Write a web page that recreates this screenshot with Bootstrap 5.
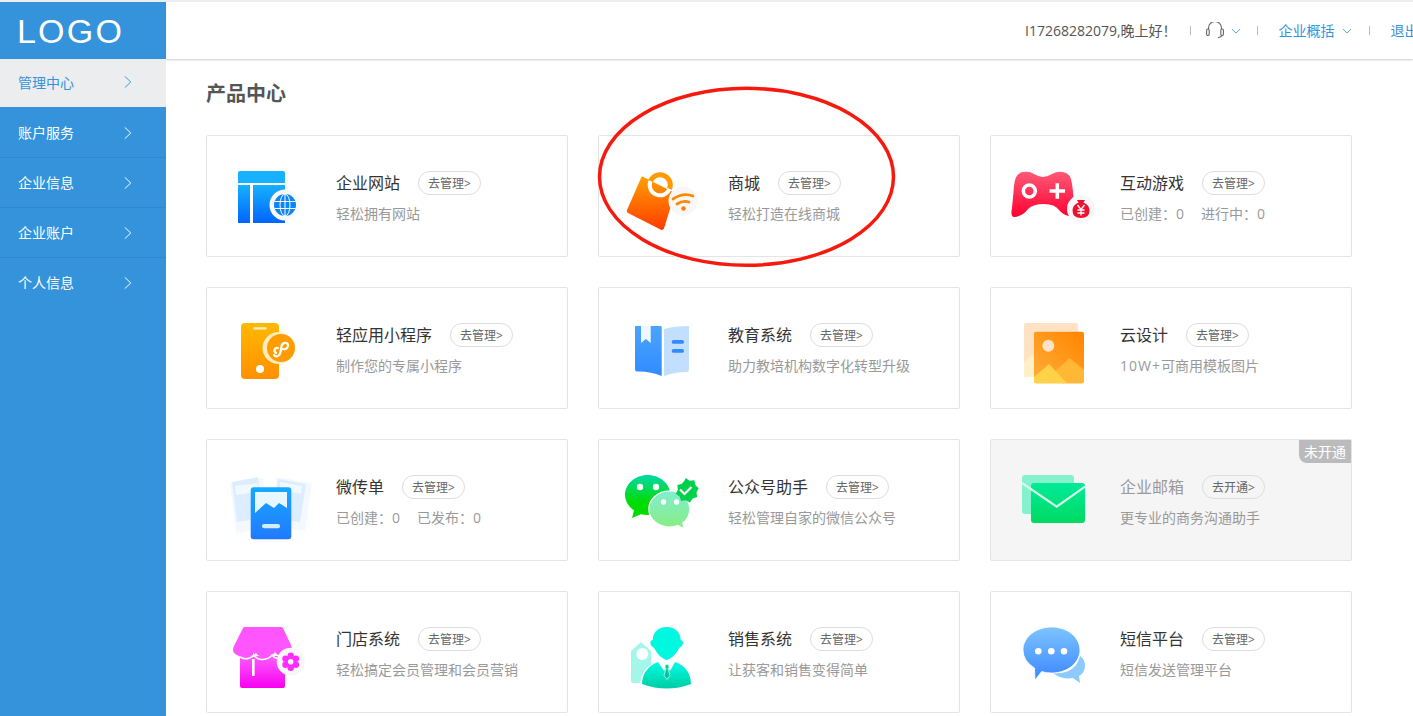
<!DOCTYPE html>
<html lang="zh-CN">
<head>
<meta charset="utf-8">
<title>产品中心</title>
<link href="https://cdn.jsdelivr.net/npm/bootstrap@5.3.0/dist/css/bootstrap.min.css" rel="stylesheet">
<style>
html,body{height:716px;overflow:hidden;background:#fff}
body{font-family:"Open Sans","Noto Sans CJK SC",sans-serif;font-size:14px;color:#333;border-top:2px solid #eee}
.side-bar{width:166px;flex:none;height:714px;background:#3593db}
.side-logo{height:57px;padding-left:17px;font-family:"Liberation Sans",sans-serif;font-size:34px;line-height:59px;letter-spacing:2.2px;color:#fff;box-shadow:0 1px 1px #cfcfcf}
.side-item{height:50px;flex:none;padding:0 34px 0 18px;color:#fff;border-bottom:1px solid #3089ce;text-decoration:none}
.side-item.on{height:48px;margin-bottom:1px;padding-bottom:2px;background:#ecedef;color:#3593db;border-bottom:0}
.side-item.tail{border-bottom-color:transparent}
.side-item svg{width:8px;height:14px}
.top-head{height:57px;padding-left:859px;white-space:nowrap;box-shadow:0 1px 2px #ccc;color:#555}
.top-head>*{flex:none}
.top-sep{width:1px;height:9px;background:#bbb;margin:0 15px 0 17px}
.top-sep.first{margin-left:13px}
.top-sep.second{margin-left:16px}
.top-link{color:#3593db;text-decoration:none;margin-left:6px}
.top-arrow{margin-left:7px}
.page-wrap{padding:0 40px}
.page-title{font-size:20px;font-weight:700;color:#555;line-height:28px;margin:21px 0 27px}
.prod-grid{display:grid;grid-template-columns:repeat(3,362px);gap:30px}
.prod-box{height:122px;border:1px solid #e4e4e4;border-radius:2px;background:#fff;position:relative}
.prod-box.off{background:#f5f5f5}
.prod-box.off .prod-name{color:#999}
.prod-ico{width:110px;height:90px;flex:none;margin:0 10px 0 9px}
.prod-text{padding-top:2px}
.prod-name{font-size:16px;line-height:24px;color:#333}
.prod-sub{color:#999;line-height:20px;margin-top:9px;white-space:nowrap}
.go-pill{font-size:12px;line-height:24px;height:24px;padding:0 9px;border:1px solid #ddd;border-radius:12px;color:#666;margin-left:18px;text-decoration:none}
.off-tag{position:absolute;top:0;right:0;width:52px;height:23px;line-height:24px;text-align:center;background:#bbb;color:#fff;border-bottom-left-radius:8px}
.gap-stat{margin-left:17px}
.wide-num{letter-spacing:1px}
.red-ring{position:absolute;left:590px;top:80px;width:320px;height:200px;pointer-events:none}
</style>
</head>
<body class="d-flex">
<svg class="position-absolute" width="0" height="0" aria-hidden="true"><defs>
<linearGradient id="gBlue" x1="0" y1="0" x2="0" y2="1"><stop offset="0" stop-color="#17b1ff"/><stop offset="1" stop-color="#0064ff"/></linearGradient>
<linearGradient id="gOrange" x1="0" y1="0" x2="0" y2="1"><stop offset="0" stop-color="#ffa000"/><stop offset="1" stop-color="#ff3c00"/></linearGradient>
<linearGradient id="gRed" x1="0" y1="0" x2="0" y2="1"><stop offset="0" stop-color="#ff5a78"/><stop offset="1" stop-color="#ff0030"/></linearGradient>
<linearGradient id="gAmber" x1="0" y1="0" x2="0" y2="1"><stop offset="0" stop-color="#ffb900"/><stop offset="1" stop-color="#ff8f00"/></linearGradient>
<linearGradient id="gBook" x1="0" y1="0" x2="0" y2="1"><stop offset="0" stop-color="#4aa5fb"/><stop offset="1" stop-color="#2f8cff"/></linearGradient>
<linearGradient id="gPic" x1="1" y1="0" x2="0" y2="1"><stop offset="0" stop-color="#ff8500"/><stop offset="1" stop-color="#ffae3a"/></linearGradient>
<linearGradient id="gLeaf" x1="0" y1="0" x2="0" y2="1"><stop offset="0" stop-color="#17a9ff"/><stop offset="1" stop-color="#2179ff"/></linearGradient>
<linearGradient id="gWx" x1="0" y1="0" x2="0" y2="1"><stop offset="0" stop-color="#00d9a8"/><stop offset=".65" stop-color="#00dc00"/></linearGradient>
<linearGradient id="gWx2" x1="0" y1="0" x2="0" y2="1"><stop offset="0" stop-color="#82edd0"/><stop offset="1" stop-color="#86ee80"/></linearGradient>
<linearGradient id="gMail" x1="0" y1="0" x2="0" y2="1"><stop offset="0" stop-color="#00ea98"/><stop offset="1" stop-color="#00da62"/></linearGradient>
<linearGradient id="gPink" x1="0" y1="0" x2="0" y2="1"><stop offset="0" stop-color="#ff5cff"/><stop offset="1" stop-color="#f700f0"/></linearGradient>
<linearGradient id="gTeal" x1="0" y1="0" x2="0" y2="1"><stop offset="0" stop-color="#00fde6"/><stop offset="1" stop-color="#00cda2"/></linearGradient>
<linearGradient id="gSms" x1="0" y1="0" x2="0" y2="1"><stop offset="0" stop-color="#7dc4ff"/><stop offset="1" stop-color="#3c87ff"/></linearGradient>
</defs></svg>

<aside class="side-bar d-flex flex-column">
  <div class="side-logo">LOGO</div>
  <a class="side-item on d-flex align-items-center justify-content-between" href="#">管理中心<svg viewBox="0 0 10 16"><path d="M1 1l7.500 7L1 15" fill="none" stroke="#3593db" stroke-width="1.200"/></svg></a>
  <a class="side-item d-flex align-items-center justify-content-between" href="#">账户服务<svg viewBox="0 0 10 16"><path d="M1 1l7.500 7L1 15" fill="none" stroke="#fff" stroke-width="1.200"/></svg></a>
  <a class="side-item d-flex align-items-center justify-content-between" href="#">企业信息<svg viewBox="0 0 10 16"><path d="M1 1l7.500 7L1 15" fill="none" stroke="#fff" stroke-width="1.200"/></svg></a>
  <a class="side-item d-flex align-items-center justify-content-between" href="#">企业账户<svg viewBox="0 0 10 16"><path d="M1 1l7.500 7L1 15" fill="none" stroke="#fff" stroke-width="1.200"/></svg></a>
  <a class="side-item tail d-flex align-items-center justify-content-between" href="#">个人信息<svg viewBox="0 0 10 16"><path d="M1 1l7.500 7L1 15" fill="none" stroke="#fff" stroke-width="1.200"/></svg></a>
</aside>

<div class="flex-grow-1 overflow-hidden">
  <header class="top-head d-flex align-items-center">
    <span>I17268282079,晚上好！</span><span class="top-sep first"></span>
    <svg width="18" height="18" viewBox="0 2 18 18" fill="none" stroke="#666" stroke-width="1.100"><path d="M2.500 9V8a6.500 6.500 0 0 1 13 0v1"/><rect x=".6" y="9" width="2.600" height="6.500" rx="1.300"/><rect x="14.800" y="9" width="2.600" height="6.500" rx="1.300"/><path d="M16 15.500q-1 2-4 2"/></svg>
    <svg class="top-arrow" width="10" height="8" viewBox="0 0 12 8" fill="none" stroke="#3593db"><path d="M1 1.500l5 5 5-5"/></svg>
    <span class="top-sep second"></span>
    <a class="top-link" href="#">企业概括</a>
    <svg class="top-arrow" width="10" height="8" viewBox="0 0 12 8" fill="none" stroke="#3593db"><path d="M1 1.500l5 5 5-5"/></svg>
    <span class="top-sep"></span>
    <a class="top-link" href="#">退出</a>
  </header>
  <main class="page-wrap">
    <h1 class="page-title">产品中心</h1>
    <div class="prod-grid">

      <div class="prod-box d-flex align-items-center">
        <svg class="prod-ico" viewBox="10 16 110 90">
          <path d="M32 38a2 2 0 0 1 2-2h43a2 2 0 0 1 2 2v10H32z" fill="#17b1ff"/>
          <rect x="32" y="50" width="12" height="38" fill="url(#gBlue)"/><rect x="47" y="50" width="32" height="38" fill="url(#gBlue)"/>
          <circle cx="79" cy="70" r="15.500" fill="#f8f9fb"/>
          <circle cx="79" cy="70" r="11" fill="#0c85f5"/>
          <g fill="none" stroke="#fff" stroke-width="1"><ellipse cx="79" cy="70" rx="5" ry="11"/><path d="M79 59v22M68.500 66.500h21M68.500 73.500h21"/></g>
        </svg>
        <div class="prod-text"><div class="d-flex align-items-center"><span class="prod-name">企业网站</span><a class="go-pill" href="#">去管理&gt;</a></div><div class="prod-sub">轻松拥有网站</div></div>
      </div>

      <div class="prod-box d-flex align-items-center">
        <svg class="prod-ico" viewBox="10 16 110 90">
          <path d="M45 41.700 77 58l-11 35.500q-1 2-3 1.300L30 78q-2-1-1-3l14-32q1-2 2-1.300z" fill="url(#gOrange)"/>
          <path d="M52.500 46a10 10 0 0 1 19 8" fill="none" stroke="#ff9a00" stroke-width="5"/>
          <path d="M52.500 46a10 10 0 0 0 19 8" fill="none" stroke="#fff" stroke-width="4"/>
          <circle cx="85" cy="66" r="14.500" fill="#f7f7f7"/>
          <g fill="none" stroke="#ff8a00" stroke-width="2.800" stroke-linecap="round"><path d="M75 64q10-7 20-3"/><path d="M79 69q6-4 12-2"/></g>
          <circle cx="85.500" cy="73.500" r="2.200" fill="#ff7a00"/>
        </svg>
        <div class="prod-text"><div class="d-flex align-items-center"><span class="prod-name">商城</span><a class="go-pill" href="#">去管理&gt;</a></div><div class="prod-sub">轻松打造在线商城</div></div>
      </div>

      <div class="prod-box d-flex align-items-center">
        <svg class="prod-ico" viewBox="10 16 110 90">
          <path d="M33 37q7-1 11 2 5 3 9 3t9-3q5-3 11-2 8 1 9 12 2 14 2 24 0 8-5 8-6-1-10-6-4-6-15-6t-16 5q-5 7-13 8-5 1-3-9 1-10 2-22 1-13 9-14z" fill="url(#gRed)"/>
          <circle cx="39.300" cy="56" r="6" fill="none" stroke="#fff" stroke-width="3.500"/>
          <path d="M59.500 56h15.500M67.300 48.300v15.500" stroke="#fff" stroke-width="3.500"/>
          <circle cx="91" cy="74" r="14" fill="#f7f7f7"/>
          <path d="M87 65h8l-1.500 2.500q6 2.500 6 8 0 7.500-8.500 7.500t-8.500-7.500q0-5.500 6-8z" fill="#f01030"/>
          <path d="M87.500 70l3.500 4.500 3.500-4.500M91 74.500v6M87.500 75h7M87.500 78h7" fill="none" stroke="#fff" stroke-width="1.300"/>
        </svg>
        <div class="prod-text"><div class="d-flex align-items-center"><span class="prod-name">互动游戏</span><a class="go-pill" href="#">去管理&gt;</a></div><div class="prod-sub">已创建：0<span class="gap-stat">进行中：0</span></div></div>
      </div>

      <div class="prod-box d-flex align-items-center">
        <svg class="prod-ico" viewBox="10 16 110 90">
          <rect x="35" y="36" width="38" height="56" rx="4" fill="url(#gAmber)"/>
          <rect x="47.300" y="40.300" width="13.400" height="2.200" rx="1.100" fill="#fff" opacity=".8"/>
          <circle cx="54" cy="82" r="4" fill="#fff"/>
          <circle cx="72.500" cy="61" r="16" fill="#fbeebc"/>
          <circle cx="75" cy="61" r="14" fill="#ff9d00"/>
          <path d="M68 68c2 3 6 1 6.500-3l1-6c1-4 6-4 6.500-1s-3 5-5 4M70 66c-3-2-1-6 2-5" fill="none" stroke="#fff" stroke-width="2.200" stroke-linecap="round"/>
        </svg>
        <div class="prod-text"><div class="d-flex align-items-center"><span class="prod-name">轻应用小程序</span><a class="go-pill" href="#">去管理&gt;</a></div><div class="prod-sub">制作您的专属小程序</div></div>
      </div>

      <div class="prod-box d-flex align-items-center">
        <svg class="prod-ico" viewBox="10 16 110 90">
          <path d="M37 39h26q.700 0 .700 1v49q-12-5-24.700-4.500-2 0-2-2z" fill="url(#gBook)"/>
          <path d="M43 39h9.700v17l-4.800-4-4.900 4z" fill="#fff" opacity=".92"/>
          <path d="M91 39v44q0 2-2 2-12 0-23 4V42q10-3 25-3z" fill="#c3dfff"/>
          <rect x="73.700" y="53" width="12.300" height="3.800" rx="1.900" fill="#2f8cff"/>
          <rect x="73.700" y="62" width="12.300" height="3.800" rx="1.900" fill="#2f8cff"/>
        </svg>
        <div class="prod-text"><div class="d-flex align-items-center"><span class="prod-name">教育系统</span><a class="go-pill" href="#">去管理&gt;</a></div><div class="prod-sub">助力教培机构数字化转型升级</div></div>
      </div>

      <div class="prod-box d-flex align-items-center">
        <svg class="prod-ico" viewBox="10 16 110 90">
          <rect x="34" y="36" width="54" height="54" rx="2" fill="#ffe2c4"/>
          <path d="M34 75l8-7 6 5v17H34z" fill="#fff0c8"/>
          <rect x="44" y="44.700" width="50" height="51.600" rx="2" fill="url(#gPic)"/>
          <circle cx="58.300" cy="58.700" r="6" fill="#ffe2c4"/>
          <path d="M72 96.300 62 87l9-8 8.500-8L94 83v11q0 2.300-2 2.300z" fill="#ffb835"/>
          <path d="M44 90l15-13 18 19.300H46q-2 0-2-2z" fill="#ffd248"/>
        </svg>
        <div class="prod-text"><div class="d-flex align-items-center"><span class="prod-name">云设计</span><a class="go-pill" href="#">去管理&gt;</a></div><div class="prod-sub"><span class="wide-num">10W+</span>可商用模板图片</div></div>
      </div>

      <div class="prod-box d-flex align-items-center">
        <svg class="prod-ico" viewBox="10 16 110 90">
          <path d="M24 44l33-5 5 50-32 5z" fill="#f4f9ff"/>
          <path d="M26 43 52 38l4 41-25 4z" fill="#dcedff"/><path d="M29 47l22-3 1 9-22 3z" fill="#f2f8ff"/>
          <path d="M70 38l36 6-7 48-30-5z" fill="#f4f9ff"/>
          <path d="M72 40l28 5-6 38-26-4z" fill="#dcedff"/><path d="M74 43l22 4-1 8-21-4z" fill="#f2f8ff"/>
          <rect x="44.700" y="48.300" width="40.600" height="52" rx="3" fill="url(#gLeaf)"/>
          <path d="M49 53h32v16l-8-5-5 5-8-5-11 10z" fill="#e7f6ff"/>
          <rect x="56" y="85" width="18" height="4.200" rx="2" fill="#d3eaff"/>
        </svg>
        <div class="prod-text"><div class="d-flex align-items-center"><span class="prod-name">微传单</span><a class="go-pill" href="#">去管理&gt;</a></div><div class="prod-sub">已创建：0<span class="gap-stat">已发布：0</span></div></div>
      </div>

      <div class="prod-box d-flex align-items-center">
        <svg class="prod-ico" viewBox="10 16 110 90">
          <path d="M49.700 36c12.500 0 22.700 9 22.700 20s-10.200 20-22.700 20q-3.500 0-6.700-.8L34 79l2-7.500Q27 65 27 56c0-11 10.200-20 22.700-20z" fill="url(#gWx)"/>
          <circle cx="42" cy="48" r="3.200" fill="#fff"/><circle cx="58" cy="48" r="3.200" fill="#fff"/>
          <path d="M71.300 52c11 0 20.500 7.500 20.500 18 0 6-2.500 10.500-7 14l1.500 6-6.500-3.500q-4 1.500-8.500 1.500c-11 0-20.500-8-20.500-18s9.500-18 20.500-18z" fill="url(#gWx2)" stroke="#fff" stroke-width="1.200"/>
          <circle cx="65.500" cy="63" r="2.700" fill="#fff"/><circle cx="78.500" cy="63" r="2.700" fill="#fff"/>
          <path d="M87.700 39l4 2.700 4.700-.4.900 4.600 3.400 3.400-2.200 4.100.7 4.700-4.500 1.400-2.800 3.900-4.200-2.100-4.600.8-1.500-4.500-3.800-2.800 2.100-4.100-.5-4.700 4.600-1.200 2.900-3.700z" fill="#00d04a"/>
          <path d="M82 50.500l4.500 4.500 7-7" fill="none" stroke="#fff" stroke-width="2.200"/>
        </svg>
        <div class="prod-text"><div class="d-flex align-items-center"><span class="prod-name">公众号助手</span><a class="go-pill" href="#">去管理&gt;</a></div><div class="prod-sub">轻松管理自家的微信公众号</div></div>
      </div>

      <div class="prod-box off d-flex align-items-center">
        <span class="off-tag">未开通</span>
        <svg class="prod-ico" viewBox="10 16 110 90">
          <rect x="32" y="36" width="52" height="39" rx="3" fill="#86f2cd"/>
          <rect x="41" y="44" width="54" height="40" rx="3" fill="url(#gMail)"/>
          <path d="M32 44 66.700 67.700 95 47.700" fill="none" stroke="#d8f9ec" stroke-width="2.200"/>
        </svg>
        <div class="prod-text"><div class="d-flex align-items-center"><span class="prod-name">企业邮箱</span><a class="go-pill" href="#">去开通&gt;</a></div><div class="prod-sub">更专业的商务沟通助手</div></div>
      </div>

      <div class="prod-box d-flex align-items-center">
        <svg class="prod-ico" viewBox="10 16 110 90">
          <path d="M34 65h45v30q0 2-2 2H36q-2 0-2-2z" fill="url(#gPink)"/>
          <path d="M38 36h37q1.500 0 2 1l8 17q1 2 0 5-1 5-8 6-6 0-8-4-3 5-10 5t-9-4q-3 3-9 4t-10-2q-6-3-3-9l9-18q.500-1 1-1z" fill="#ff55ff"/>
          <path d="M34 66q5 3 9.500 1t4.500-3q3 5 9 4.500t9-4.500q3 4 8.500 3.500" fill="none" stroke="#fff" stroke-width="1.500"/>
          <rect x="46" y="68" width="2.600" height="17" fill="#fff"/>
          <circle cx="84.700" cy="70.700" r="14" fill="#f7f7f7"/>
          <g fill="#ff2bff"><circle cx="84.700" cy="64.700" r="3.200"/><circle cx="89.900" cy="67.700" r="3.200"/><circle cx="89.900" cy="73.700" r="3.200"/><circle cx="84.700" cy="76.700" r="3.200"/><circle cx="79.500" cy="73.700" r="3.200"/><circle cx="79.500" cy="67.700" r="3.200"/><circle cx="84.700" cy="70.700" r="5"/></g>
          <circle cx="84.700" cy="70.700" r="2.800" fill="#f7f7f7"/>
        </svg>
        <div class="prod-text"><div class="d-flex align-items-center"><span class="prod-name">门店系统</span><a class="go-pill" href="#">去管理&gt;</a></div><div class="prod-sub">轻松搞定会员管理和会员营销</div></div>
      </div>

      <div class="prod-box d-flex align-items-center">
        <svg class="prod-ico" viewBox="10 16 110 90">
          <path d="M33 60l10-9 10 9v14q-8 3-11 18H35q-2 0-2-2z" fill="#a4f6e8"/>
          <circle cx="44.300" cy="63" r="6" fill="#fff"/>
          <path d="M68.700 36c9 0 14 6 14 13 2 .5 3 2 2 4.500s-3 3-3.500 3.500c-3 6-8 11-12.500 12-4.500-1-9.500-6-12.500-12-.5-.5-2.500-1-3.500-3.500s0-4 2-4.500c0-7 5-13 14-13z" fill="#00f8e0"/>
          <path d="M44 93c0-12 8-19 16-22l6 9 2-3h2l2 3 5-9c9 3 16 10 16 22q-24 9-49 0z" fill="url(#gTeal)"/>
          <path d="M67.500 73.500h3l.5 3-1 1 2 7-3 4-3-4 2-7-1-1z" fill="#00c8a0" stroke="#fff" stroke-width=".6"/>
        </svg>
        <div class="prod-text"><div class="d-flex align-items-center"><span class="prod-name">销售系统</span><a class="go-pill" href="#">去管理&gt;</a></div><div class="prod-sub">让获客和销售变得简单</div></div>
      </div>

      <div class="prod-box d-flex align-items-center">
        <svg class="prod-ico" viewBox="10 16 110 90">
          <path d="M90 65q5 3 5 10 0 7-6 10l1 7-7-5q-12 2-20-5 22 2 27-17z" fill="#8ccbfb"/>
          <path d="M61.700 36c15.500 0 28.300 10 28.300 23S77.200 82 61.700 82q-6 0-10-1.500L45 89l-.5-12Q33 70 33 59c0-13 13-23 28.700-23z" fill="url(#gSms)" stroke="#fff" stroke-width=".8"/>
          <circle cx="48.300" cy="60.300" r="3.300" fill="#fff"/><circle cx="61.300" cy="60.300" r="3.300" fill="#fff"/><circle cx="74" cy="60.300" r="3.300" fill="#fff"/>
        </svg>
        <div class="prod-text"><div class="d-flex align-items-center"><span class="prod-name">短信平台</span><a class="go-pill" href="#">去管理&gt;</a></div><div class="prod-sub">短信发送管理平台</div></div>
      </div>

    </div>
  </main>
</div>

<svg class="red-ring" viewBox="590 80 320 200"><ellipse cx="746.500" cy="176.800" rx="147" ry="88.500" fill="none" stroke="#f8190e" stroke-width="3.500"/></svg>
</body>
</html>
